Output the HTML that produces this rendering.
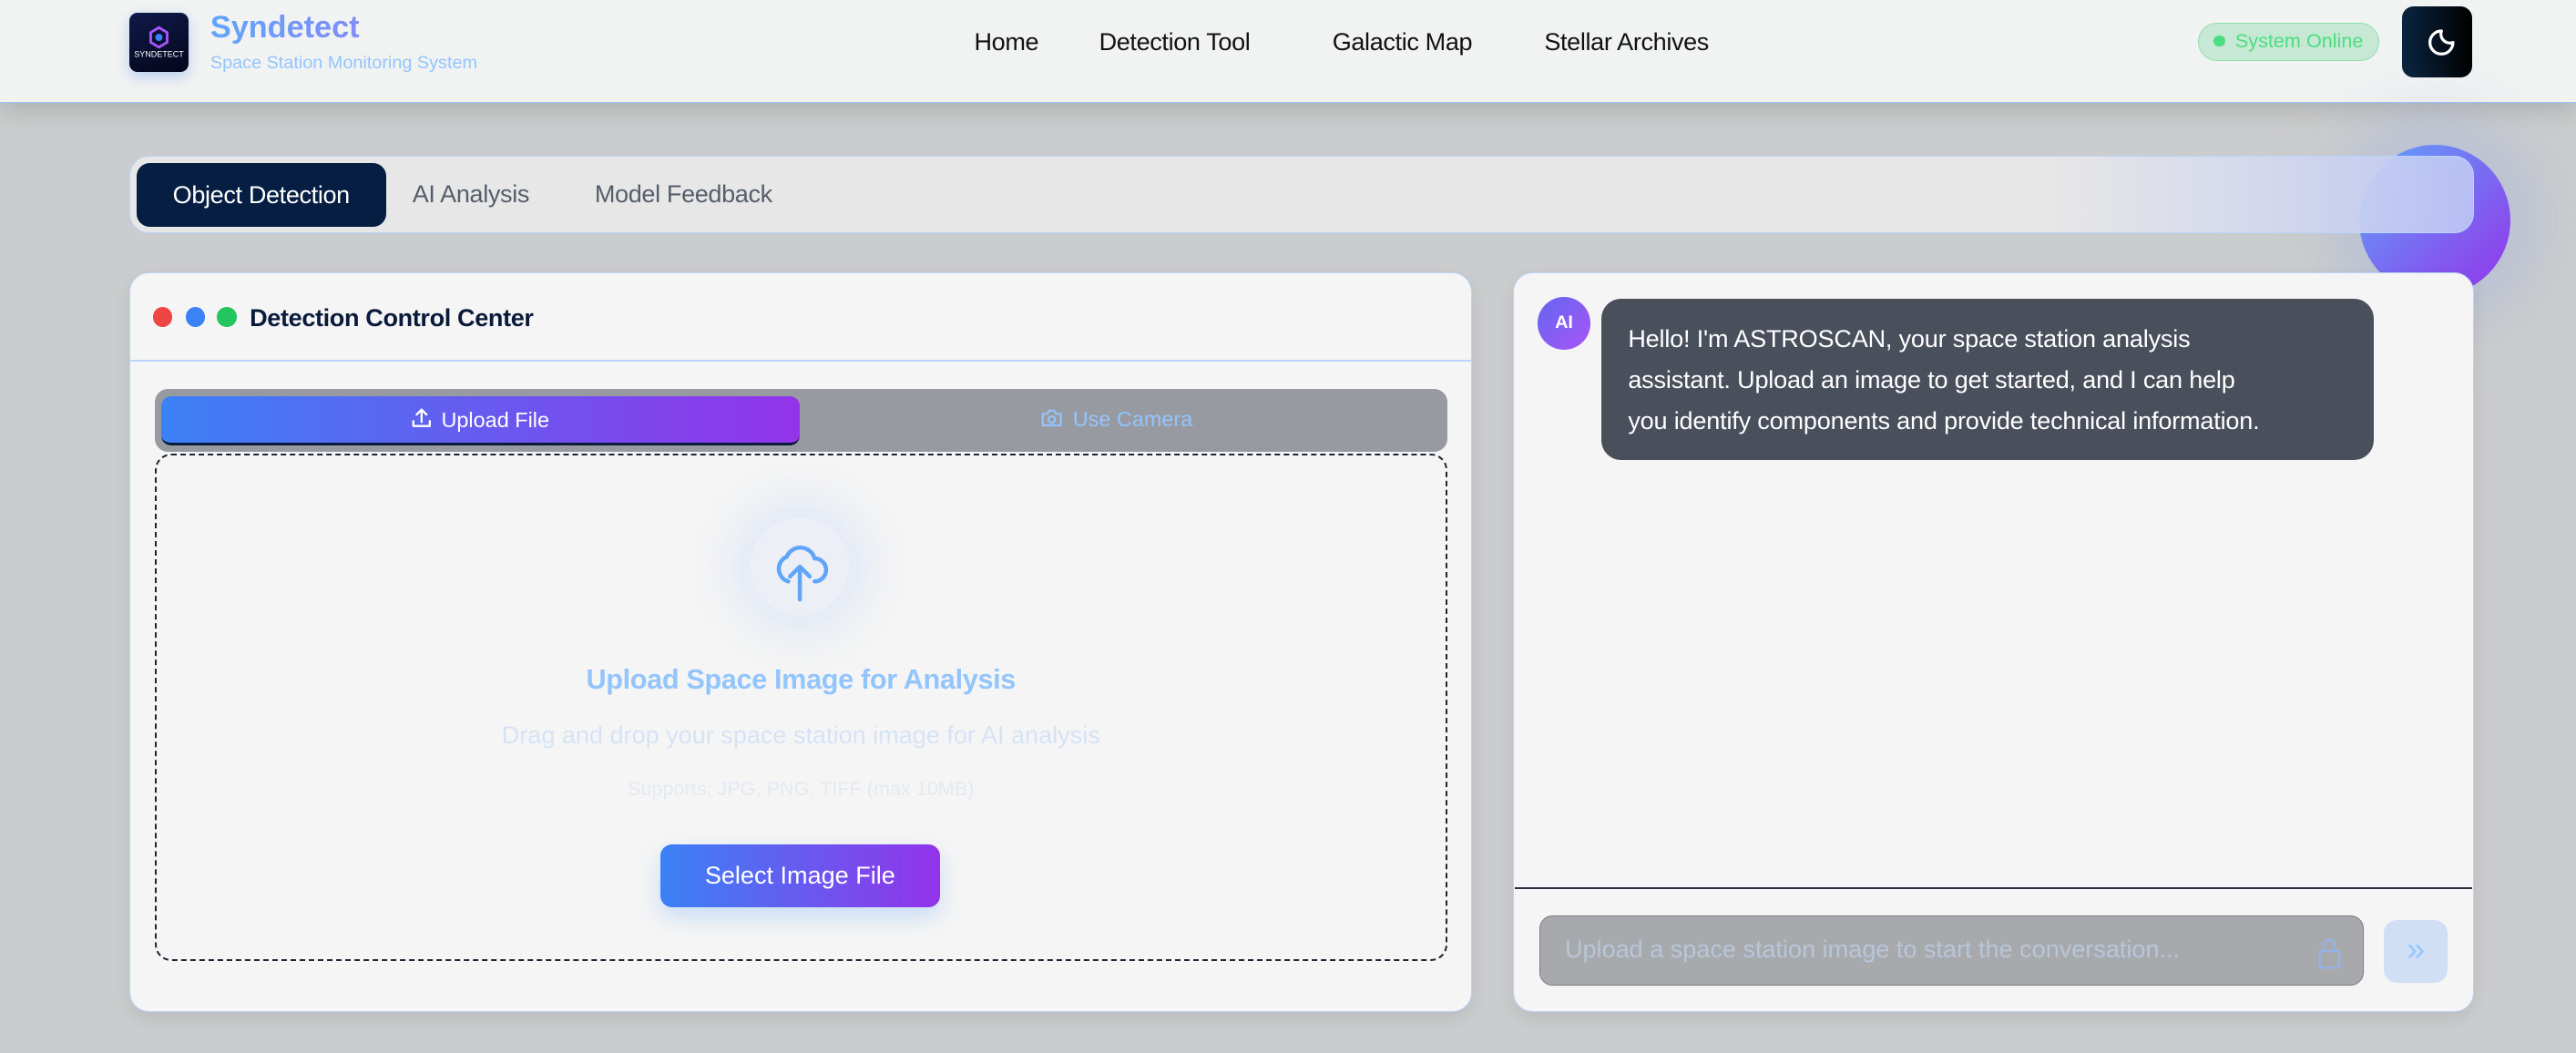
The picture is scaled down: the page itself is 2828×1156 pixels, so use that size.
<!DOCTYPE html>
<html><head><meta charset="utf-8"><style>
html,body{margin:0;padding:0;}
body{width:2828px;height:1155px;overflow:hidden;background:#cbcccd;font-family:"Liberation Sans",sans-serif;}
#z{zoom:1.80357;width:1568px;height:641px;position:relative;}
.a{position:absolute;}
.hdr{left:0;top:0;width:1568px;height:62px;background:#f1f2f2;border-bottom:1px solid #93c5fd;box-shadow:0 4px 14px rgba(0,0,0,.15);}
.nav{top:17px;font-size:15px;color:#111;letter-spacing:-0.2px}
.grad{background:linear-gradient(90deg,#3b82f6,#9333ea);}
</style></head><body><div id="z">
<div class="a hdr"></div>
<div class="a" style="left:79px;top:8px;width:36px;height:36px;border-radius:5px;background:linear-gradient(160deg,#0f1a4a,#05061a);box-shadow:0 3px 8px rgba(59,130,246,.3)">
<svg width="36" height="36" viewBox="0 0 36 36"><polygon points="18,9 23,12 23,18 18,21 13,18 13,12" fill="none" stroke="#a855f7" stroke-width="1.6"/><circle cx="18" cy="15" r="2.2" fill="#3b82f6"/><text x="18" y="27" font-size="5" fill="#fff" text-anchor="middle" font-family="Liberation Sans">SYNDETECT</text></svg></div>
<div class="a" style="left:128px;top:6px;font-size:19px;font-weight:bold;background:linear-gradient(90deg,#60a5fa,#818cf8);-webkit-background-clip:text;color:transparent">Syndetect</div>
<div class="a" style="left:128px;top:32px;font-size:11px;color:#93c5fd">Space Station Monitoring System</div>
<div class="a nav" style="left:593px">Home</div>
<div class="a nav" style="left:669px">Detection Tool</div>
<div class="a nav" style="left:811px">Galactic Map</div>
<div class="a nav" style="left:940px">Stellar Archives</div>
<div class="a" style="left:1338px;top:14px;width:110px;height:23px;border-radius:12px;background:#c6e8d4;border:1px solid #8ee0ad;box-sizing:border-box;font-size:12px;color:#4ade80;line-height:21px;padding-left:22px">System Online<span class="a" style="left:9px;top:7px;width:7px;height:7px;border-radius:50%;background:#4ade80"></span></div>
<div class="a" style="left:1462px;top:4px;width:43px;height:43px;border-radius:7px;background:linear-gradient(90deg,#0a2540,#000)">
<svg width="43" height="43" viewBox="0 0 43 43"><path d="M24 15a7 7 0 1 0 7 7a5.5 5.5 0 0 1-7-7z" fill="none" stroke="#fff" stroke-width="1.8" stroke-linejoin="round"/></svg></div>
<div class="a" style="left:1436px;top:88px;width:92px;height:92px;border-radius:50%;background:linear-gradient(135deg,#60a5fa,#9333ea);box-shadow:0 0 40px 15px rgba(147,170,230,.35)"></div>
<div class="a" style="left:79px;top:95px;width:1427px;height:47px;box-sizing:border-box;border-radius:12px;background:linear-gradient(90deg,#e7e7e7 0,#e7e7e7 82%,rgba(190,200,245,.9) 100%);border:1px solid #b9d5fb"></div>
<div class="a" style="left:83px;top:99px;width:152px;height:39px;border-radius:8px;background:#051e42;color:#fff;font-size:15px;text-align:center;line-height:39px;letter-spacing:-0.2px">Object Detection</div>
<div class="a" style="left:251px;top:110px;font-size:15px;color:#555e6a;letter-spacing:-0.2px">AI Analysis</div>
<div class="a" style="left:362px;top:110px;font-size:15px;color:#555e6a;letter-spacing:-0.2px">Model Feedback</div>
<!-- left panel -->
<div class="a" style="left:79px;top:166px;width:817px;height:450px;box-sizing:border-box;border:1px solid #b9d5fb;border-radius:12px;background:#f5f5f5;box-shadow:0 4px 10px rgba(0,0,0,.08)"></div>
<div class="a" style="left:79px;top:219px;width:817px;height:1px;background:#b9d5fb"></div>
<div class="a" style="left:93px;top:187px;width:12px;height:12px;border-radius:50%;background:#ef4444"></div>
<div class="a" style="left:113px;top:187px;width:12px;height:12px;border-radius:50%;background:#3b82f6"></div>
<div class="a" style="left:132px;top:187px;width:12px;height:12px;border-radius:50%;background:#22c55e"></div>
<div class="a" style="left:152px;top:185px;font-size:15px;font-weight:bold;color:#0a1a3a;letter-spacing:-0.2px">Detection Control Center</div>
<div class="a" style="left:94px;top:237px;width:787px;height:38px;border-radius:8px;background:#989aa2"></div>
<div class="a grad" style="left:98px;top:241px;width:389px;height:30px;border-radius:6px;border-bottom:2px solid #0a1a3a;box-sizing:border-box;color:#fff;font-size:13px;text-align:center;line-height:29px"><svg width="12" height="13" viewBox="0 0 12 13" style="vertical-align:-1px;margin-right:6px"><path d="M6 9V1.5M3 4.5l3-3 3 3M1 8.5v3h10v-3" fill="none" stroke="#fff" stroke-width="1.3" stroke-linecap="round" stroke-linejoin="round"/></svg>Upload File</div>
<div class="a" style="left:633px;top:248px;font-size:13px;color:#93c5fd"><svg width="14" height="12" viewBox="0 0 14 12" style="vertical-align:-1px;margin-right:6px"><path d="M1.5 3.5h3l1-2h3l1 2h3v7h-11z" fill="none" stroke="#93c5fd" stroke-width="1.2" stroke-linejoin="round"/><circle cx="7" cy="7" r="2" fill="none" stroke="#93c5fd" stroke-width="1.2"/></svg>Use Camera</div>
<div class="a" style="left:94px;top:276px;width:787px;height:309px;box-sizing:border-box;border:1.5px dashed #1e2535;border-radius:10px"></div>
<div class="a" style="left:457px;top:315px;width:60px;height:60px;border-radius:50%;box-shadow:0 0 30px 10px rgba(170,195,250,.3);background:rgba(200,215,250,.18)"></div>
<svg class="a" style="left:467px;top:325px" width="40" height="42" viewBox="0 0 40 42"><path d="M13 29a8 8 0 0 1-1-15a9 9 0 0 1 17 1a7 7 0 0 1 0 14" fill="none" stroke="#60a5fa" stroke-width="2.5" stroke-linecap="round"/><path d="M20 40V20M14 26l6-6 6 6" fill="none" stroke="#60a5fa" stroke-width="2.5" stroke-linecap="round" stroke-linejoin="round"/></svg>
<div class="a" style="left:94px;width:787px;top:404px;text-align:center;font-size:17px;font-weight:bold;color:#93c5fd;letter-spacing:-0.2px">Upload Space Image for Analysis</div>
<div class="a" style="left:94px;width:787px;top:439px;text-align:center;font-size:15px;color:#d6e3f5">Drag and drop your space station image for AI analysis</div>
<div class="a" style="left:94px;width:787px;top:473px;text-align:center;font-size:12px;color:#e3e9f2">Supports: JPG, PNG, TIFF (max 10MB)</div>
<div class="a grad" style="left:402px;top:514px;width:170px;height:38px;border-radius:7px;color:#fff;font-size:15px;text-align:center;line-height:38px;box-shadow:0 6px 14px rgba(96,165,250,.3)">Select Image File</div>
<!-- right panel -->
<div class="a" style="left:921px;top:166px;width:585px;height:450px;box-sizing:border-box;border:1px solid #b9d5fb;border-radius:12px;background:#f5f5f5;box-shadow:0 4px 10px rgba(0,0,0,.08)"></div>
<div class="a" style="left:936px;top:181px;width:32px;height:32px;border-radius:50%;background:linear-gradient(135deg,#6366f1,#a855f7);color:#fff;font-size:11px;font-weight:bold;text-align:center;line-height:32px">AI</div>
<div class="a" style="left:975px;top:182px;width:470px;height:98px;box-sizing:border-box;border-radius:12px;background:#4a4f5c;color:#fff;font-size:15px;line-height:25px;padding:12px 16px;letter-spacing:-0.1px">Hello! I'm ASTROSCAN, your space station analysis<br>assistant. Upload an image to get started, and I can help<br>you identify components and provide technical information.</div>
<div class="a" style="left:922px;top:540px;width:583px;height:1px;background:#2a3142"></div>
<div class="a" style="left:937px;top:557px;width:502px;height:43px;box-sizing:border-box;border-radius:8px;background:#a8a9ad;border:1px solid #7a7c84;color:#b8c6d8;font-size:15px;line-height:41px;padding-left:15px">Upload a space station image to start the conversation...</div>
<svg class="a" style="left:1410px;top:570px" width="16" height="20" viewBox="0 0 16 20"><rect x="2" y="9" width="12" height="10" rx="1" fill="none" stroke="#93b4e8" stroke-width="1.3"/><path d="M5 9V5a3 3 0 0 1 6 0v4" fill="none" stroke="#93b4e8" stroke-width="1.3"/></svg>
<div class="a" style="left:1451px;top:560px;width:39px;height:38px;border-radius:8px;background:#d0dff5;color:#93c5fd;font-size:20px;text-align:center;line-height:36px">»</div>
</div></body></html>
